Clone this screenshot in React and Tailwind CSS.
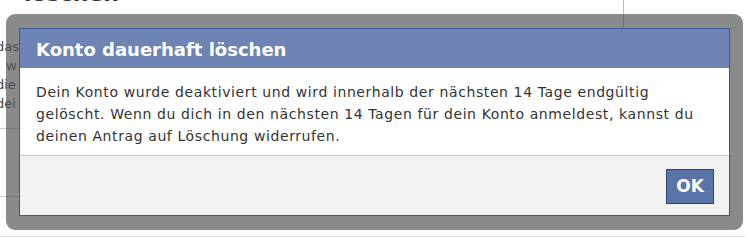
import React from 'react';

const font = { fontFamily: '"DejaVu Sans", "Liberation Sans", sans-serif' };

// Page behind the dialog, only partly visible
const BackgroundPage = () => (
  <div className="absolute inset-0 bg-white text-[#333]" style={font}>
    <div className="ml-[24px] -mt-[16px] text-[22px] font-bold leading-[20px]">löschen</div>
    <div className="mt-[33px] -ml-[4px] text-[13px] leading-[19px] text-[#444]">
      <div>das</div>
      <div className="pl-[10px]">w</div>
      <div>die</div>
      <div>dei</div>
    </div>
    <div className="mt-[15px] w-[20px] border-t border-[#ccc]" />
    <div className="mt-[67px] w-[20px] border-t border-[#ccc]" />
    <div className="absolute left-[623px] top-0 h-[200px] border-l border-[#bbb]" />
    <div className="absolute left-0 right-[5px] top-[236px] border-t border-[#ddd]" />
  </div>
);

const App = () => {
  return (
    <div className="relative w-[750px] h-[250px] overflow-hidden bg-white">
      <BackgroundPage />

      {/* Dialog overlay */}
      <div className="absolute left-[6px] top-[14px] w-[737px] rounded-[9px] bg-[rgba(82,82,82,0.68)] px-[13px] pt-[14px] pb-[14px]">
        <div className="border border-[#555] bg-white" style={font}>
          <div className="h-[40px] border-t border-[#3b5998] bg-[#6d84b4] -mt-px -mx-px border-x border-x-[#3b5998] pl-[16px] pt-[2px] flex items-center">
            <h2 className="text-[18px] font-bold text-white leading-none">Konto dauerhaft löschen</h2>
          </div>
          <div className="px-[16px] pt-[13px] pb-[8px] text-[14px] leading-[22px] tracking-[0.6px] text-[#333]">
            Dein Konto wurde deaktiviert und wird innerhalb der nächsten 14 Tage endgültig
            <br />
            gelöscht. Wenn du dich in den nächsten 14 Tagen für dein Konto anmeldest, kannst du
            <br />
            deinen Antrag auf Löschung widerrufen.
          </div>
          <div className="flex justify-end border-t border-[#ccc] bg-[#f2f2f2] pt-[13px] pb-[11px] pr-[15px]">
            <button className="h-[35px] w-[48px] border border-[#29447e] bg-[#5b74a8] text-[17px] font-bold text-white">
              OK
            </button>
          </div>
        </div>
      </div>
    </div>
  );
};

export default App;
